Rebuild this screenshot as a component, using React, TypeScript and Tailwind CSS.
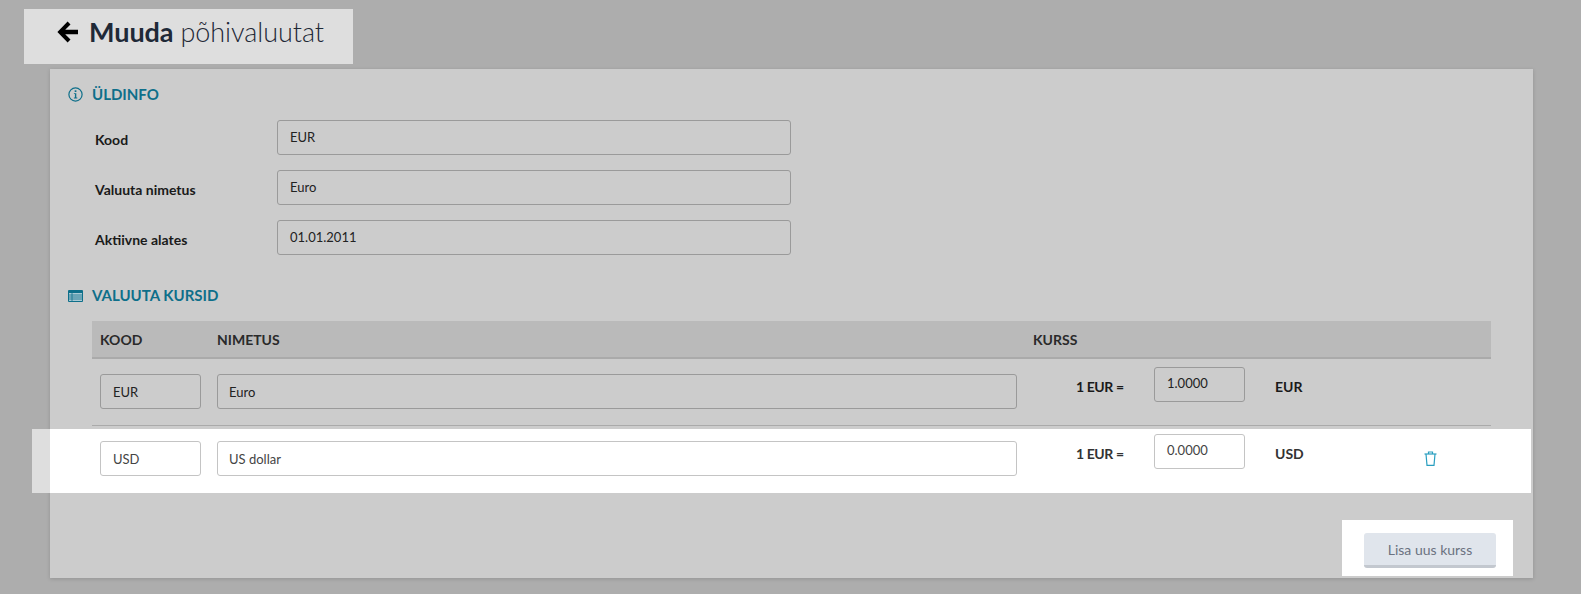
const lato = { fontFamily: 'Lato, sans-serif' };

function BackArrow() {
  return (
    <svg width="21" height="22" viewBox="0 0 21 22" className="text-black mr-[11px] shrink-0" fill="currentColor">
      <path d="M10.6 0.6l2.9 2.9-5.3 5.3H21v4.4H8.2l5.3 5.3-2.9 2.9L0.4 11z" />
    </svg>
  );
}

function InfoIcon() {
  return (
    <svg width="15" height="15" viewBox="0 0 15 15" fill="none" className="text-[#0e6f8a]">
      <circle cx="7.5" cy="7.5" r="6.6" stroke="currentColor" strokeWidth="1.2" />
      <rect x="6.7" y="3.3" width="1.7" height="1.7" fill="currentColor" />
      <path d="M5.9 6.2h2.4v4.3h1v.9H5.9v-.9h1V7.1h-1z" fill="currentColor" />
    </svg>
  );
}

function TableIcon() {
  return (
    <svg width="15" height="12" viewBox="0 0 15 12" className="text-[#0e6f8a]">
      <rect x="0" y="0" width="15" height="12" rx="1" fill="currentColor" />
      <rect x="1" y="3" width="13" height="8" fill="#a9c9d4" />
      <path d="M1 5h13M1 7h13M1 9h13" stroke="#0e6f8a" strokeWidth="0.8" />
      <path d="M4 3v8" stroke="#0e6f8a" strokeWidth="0.8" />
    </svg>
  );
}

function TrashIcon() {
  return (
    <svg width="13" height="15" viewBox="0 0 13 15" fill="none" stroke="#2a9fc0" strokeWidth="1.2">
      <path d="M0.5 3h12" />
      <path d="M4.5 3V1h4v2" />
      <path d="M2 3l1 11.4h7L11 3" />
    </svg>
  );
}

function FormRow({ label, value }: { label: string; value: string }) {
  return (
    <div className="flex items-center h-[35px]">
      <div className="w-[182px] pt-[3px] text-[14px] font-bold text-[#1a1a1a]">{label}</div>
      <div className="w-[514px] h-[35px] flex items-center pl-[12px] text-[13px] text-[#222] border border-[#9a9a9a] rounded-[3px] bg-[#cccccc] pt-[1px]">
        {value}
      </div>
    </div>
  );
}

function Field({ value, width, active }: { value: string; width: string; active: boolean }) {
  return (
    <div
      className={`${width} h-[35px] flex items-center text-[13px] rounded-[3px] border ${
        active ? 'bg-white border-[#c4c4c4] text-[#444]' : 'bg-[#cccccc] border-[#9a9a9a] text-[#222]'
      }`}
    >
      {value}
    </div>
  );
}

function RateRow({ code, name, rate, active }: { code: string; name: string; rate: string; active: boolean }) {
  const strong = active ? 'text-[#333]' : 'text-[#1a1a1a]';
  return (
    <div className={`relative h-[67px] border-b ${active ? 'border-[#e4e4e4]' : 'border-[#aaaaaa]'}`}>
      {active && (
        <>
          <div className="absolute left-[-60px] w-[18px] top-[3px] h-[64px] bg-[#dedede]" />
          <div className="absolute left-[-42px] right-[-40px] top-[3px] h-[64px] bg-white" />
        </>
      )}
      <div className="relative flex">
        <div className="w-[125px] pl-[8px] pt-[15px]">
          <Field value={code} width="w-[101px] pl-[12px] pt-[2px]" active={active} />
        </div>
        <div className="w-[859px] pt-[15px]">
          <Field value={name} width="w-[800px] pl-[11px] pt-[2px]" active={active} />
        </div>
        <div className={`w-[78px] pt-[16px] text-[14px] font-bold leading-[24px] tracking-[-0.4px] ${strong}`}>1 EUR =</div>
        <div className="w-[121px] pt-[8px]">
          <Field value={rate} width="w-[91px] pl-[12px] pb-[1px]" active={active} />
        </div>
        <div className={`w-[149px] pt-[16px] text-[14px] font-bold leading-[24px] ${strong}`}>{code}</div>
        {active && (
          <div className="pt-[25px]">
            <TrashIcon />
          </div>
        )}
      </div>
    </div>
  );
}

export default function App() {
  return (
    <div className="h-[594px] overflow-hidden bg-[#adadad] pt-[9px]" style={lato}>
      <div className="ml-[24px] w-[329px] h-[55px] bg-[#dedede] flex items-center pl-[33px] pb-[10px]">
        <BackArrow />
        <h1 className="text-[27px] leading-none tracking-[-0.05px] text-[#1f2937]">
          <span className="font-bold">Muuda</span> <span className="font-light">põhivaluutat</span>
        </h1>
      </div>

      <div className="mt-[5px] ml-[50px] w-[1483px] h-[509px] bg-[#cccccc] shadow-[0_1px_4px_rgba(0,0,0,0.15)] flex flex-col">
        <div className="h-[51px] pl-[18px] pb-[1px] flex items-center gap-[9px]">
          <InfoIcon />
          <h2 className="text-[15px] font-bold text-[#0e6f8a]">ÜLDINFO</h2>
        </div>
        <div className="pl-[45px] flex flex-col gap-[15px]">
          <FormRow label="Kood" value="EUR" />
          <FormRow label="Valuuta nimetus" value="Euro" />
          <FormRow label="Aktiivne alates" value="01.01.2011" />
        </div>

        <div className="mt-[15px] h-[51px] pl-[18px] flex items-center gap-[9px]">
          <TableIcon />
          <h2 className="text-[15px] font-bold text-[#0e6f8a]">VALUUTA KURSID</h2>
        </div>

        <div className="ml-[42px] w-[1399px]">
          <div className="h-[38px] bg-[#bababa] border-b-2 border-[#aaaaaa] flex items-center text-[14px] font-bold text-[#2a2a2a]">
            <div className="w-[125px] pl-[8px]">KOOD</div>
            <div className="w-[816px]">NIMETUS</div>
            <div>KURSS</div>
          </div>
          <RateRow code="EUR" name="Euro" rate="1.0000" active={false} />
          <RateRow code="USD" name="US dollar" rate="0.0000" active={true} />
        </div>

        <div className="mt-auto mb-[2px] mr-[20px] self-end w-[171px] h-[56px] bg-white flex justify-end pt-[13px] pr-[17px]">
          <button className="w-[132px] h-[35px] bg-[#e0e5ec] border-b-[3px] border-[#c3c8cf] rounded-[3px] text-[14px] text-[#6b7280]">
            Lisa uus kurss
          </button>
        </div>
      </div>
    </div>
  );
}
